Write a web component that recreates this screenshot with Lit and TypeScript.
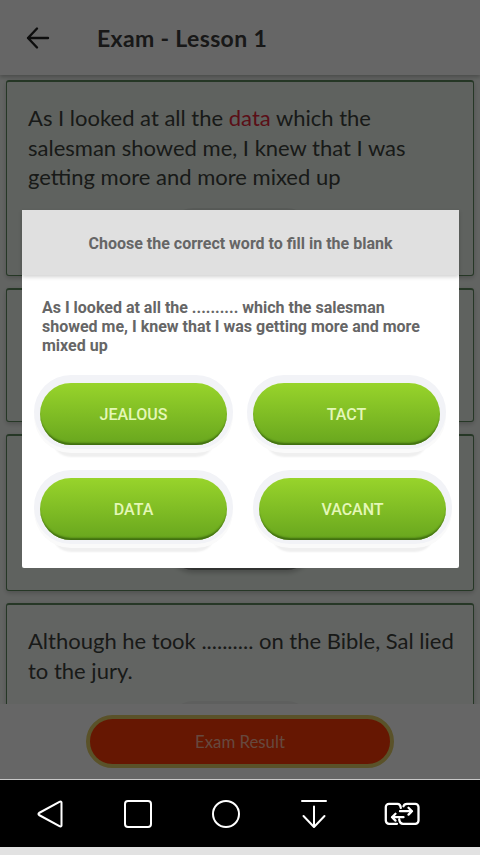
import { LitElement, html, css } from "lit";
import { customElement } from "lit/decorators.js";

@customElement("app-root")
export class AppRoot extends LitElement {
  static styles = css`
    :host { display: block; width: 480px; height: 855px; overflow: hidden; background: #e2e2e2; font-family: Lato, "Open Sans", sans-serif; }
    * { box-sizing: border-box; }
    .screen { position: relative; height: 779px; display: flex; flex-direction: column; background: #fff; overflow: hidden; }
    .top { height: 75px; flex: none; display: flex; align-items: center; padding: 0 0 0 25px; background: #fff; box-shadow: 0 2px 4px rgba(0,0,0,.25); position: relative; z-index: 1; }
    .top svg { width: 26px; height: 26px; display: block; }
    .top h1 { margin: 0 0 0 46px; font-size: 23px; font-weight: 700; color: #3c3c3c; line-height: 28px; letter-spacing: .35px; }
    .list { height: 629px; flex: none; overflow: hidden; padding: 5px 6px 0; display: flex; flex-direction: column; gap: 12px; background: #f6faf6; }
    .card { flex: none; border: 1.5px solid #5f8a5f; border-top-width: 2px; border-radius: 3px; padding: 21px 12px 0 21px; background: #edf5ed; box-shadow: 0 2px 5px rgba(0,0,0,.2); }
    .card p { margin: 0; font-size: 22px; line-height: 29.5px; color: #3e433e; }
    .card em { font-style: normal; color: #e0263a; }
    .pill { width: 144px; height: 50px; margin-left: 139.5px; border-radius: 25px; background: #dde3dd; }
    .c1 { height: 196px; } .c1 .pill { margin-top: 16px; }
    .c2 { height: 134px; }
    .c3 { height: 157px; } .c3 .pill { margin-top: 63px; background: #7c807c; box-shadow: 0 3px 4px rgba(0,0,0,.2); }
    .c4 { height: 180px; background: #f6f9f6; } .c4 .pill { margin-top: 16px; background: #eaeeea; }
    .foot { height: 75px; flex: none; display: flex; justify-content: center; align-items: flex-start; padding-top: 11px; background: #fff; }
    .result { width: 308px; height: 53px; border-radius: 27px; border: 4px solid #e0cc66; background: #ff3a05; color: #ffb49c; font: 400 16.800px/45px Lato, sans-serif; text-align: center; }
    .scrim { position: absolute; inset: 0; background: rgba(0,0,0,.6); z-index: 2; }
    .modal { position: absolute; left: 22px; top: 210px; width: 437px; height: 358px; background: #fff; z-index: 3; border-radius: 2px; font-family: Roboto, sans-serif; display: flex; flex-direction: column; }
    .mhead { height: 65px; flex: none; padding-top: 1px; background: #e0e0e0; display: flex; align-items: center; justify-content: center; font-size: 16px; font-weight: 700; color: #666; box-shadow: 0 2px 4px rgba(0,0,0,.18); }
    .q { margin: 23px 27px 0 20px; font-size: 16px; font-weight: 700; line-height: 19px; color: #666; }
    .row { display: flex; padding-left: 18px; }
    .r1 { gap: 26px; margin-top: 28px; }
    .r2 { gap: 32px; margin-top: 33px; }
    .opt { width: 187px; height: 62px; border-radius: 31px; background: linear-gradient(#98d42b, #68a61e); color: #e4f7b8; display: flex; align-items: center; justify-content: center; font-size: 16px; font-weight: 500; box-shadow: inset 0 -3px 2px -1px #3f6d10, 0 -2px 0 6px #f2f3f7, 0 2px 0 6px #fafafa, 0 24px 2px -12px #efefef; }
    .nav { height: 68px; border-top: 1px solid #c8c8c8; background: #000; display: grid; grid-template-columns: repeat(5, 88px); padding-left: 5.5px; align-items: center; justify-items: center; }
    .nav svg { display: block; fill: none; stroke: #fff; stroke-width: 2; stroke-linecap: round; stroke-linejoin: round; }
  `;

  render() {
    return html`
      <div class="screen">
        <header class="top">
          <svg viewBox="0 0 26 26" fill="none" stroke="#222" stroke-width="2.4" stroke-linecap="round" stroke-linejoin="round"><path d="M3 13h20M12 3.5 3 13l9 9.5"/></svg>
          <h1>Exam - Lesson 1</h1>
        </header>
        <main class="list">
          <section class="card c1">
            <p>As I looked at all the <em>data</em> which the salesman showed me, I knew that I was getting more and more mixed up</p>
            <div class="pill"></div>
          </section>
          <section class="card c2"></section>
          <section class="card c3"><div class="pill"></div></section>
          <section class="card c4">
            <p>Although he took .......... on the Bible, Sal lied to the jury.</p>
            <div class="pill"></div>
          </section>
        </main>
        <footer class="foot"><div class="result">Exam Result</div></footer>
        <div class="scrim"></div>
        <div class="modal">
          <div class="mhead">Choose the correct word to fill in the blank</div>
          <p class="q">As I looked at all the .......... which the salesman showed me, I knew that I was getting more and more mixed up</p>
          <div class="row r1"><div class="opt">JEALOUS</div><div class="opt">TACT</div></div>
          <div class="row r2"><div class="opt">DATA</div><div class="opt">VACANT</div></div>
        </div>
      </div>
      <nav class="nav">
        <svg width="28" height="30" viewBox="0 0 28 30"><path d="M25.500 3.500v23a1 1 0 0 1-1.600.8L3 16a1.200 1.200 0 0 1 0-2L23.900 2.700a1 1 0 0 1 1.600.8z"/></svg>
        <svg width="30" height="30" viewBox="0 0 30 30"><rect x="2" y="2" width="26" height="26" rx="3"/></svg>
        <svg width="30" height="30" viewBox="0 0 30 30"><circle cx="15" cy="15" r="13"/></svg>
        <svg width="28" height="30" viewBox="0 0 28 30"><path d="M2 2h24M14 7.500v20M3.500 17 14 28l10.500-11"/></svg>
        <svg width="36" height="26" viewBox="0 0 36 26"><path stroke-width="2.3" d="M16.800 6.800C16.500 4 15.500 2.800 13.500 2.800H5a3.200 3.200 0 0 0-3.200 3.200v13.600a3.200 3.200 0 0 0 3.200 3.200h8M19.500 5.200C20 3.500 21 2.800 23 2.800h8.300a3.200 3.200 0 0 1 3.200 3.200v13.600a3.200 3.200 0 0 1-3.200 3.200H19c-2 0-3.400-1.800-3.800-4.300M16 10.200h12M24.500 6.800 28 10.200l-3.500 3.400M19.500 16.200H8M11.500 12.800 8 16.200l3.500 3.400"/></svg>
      </nav>
    `;
  }
}
